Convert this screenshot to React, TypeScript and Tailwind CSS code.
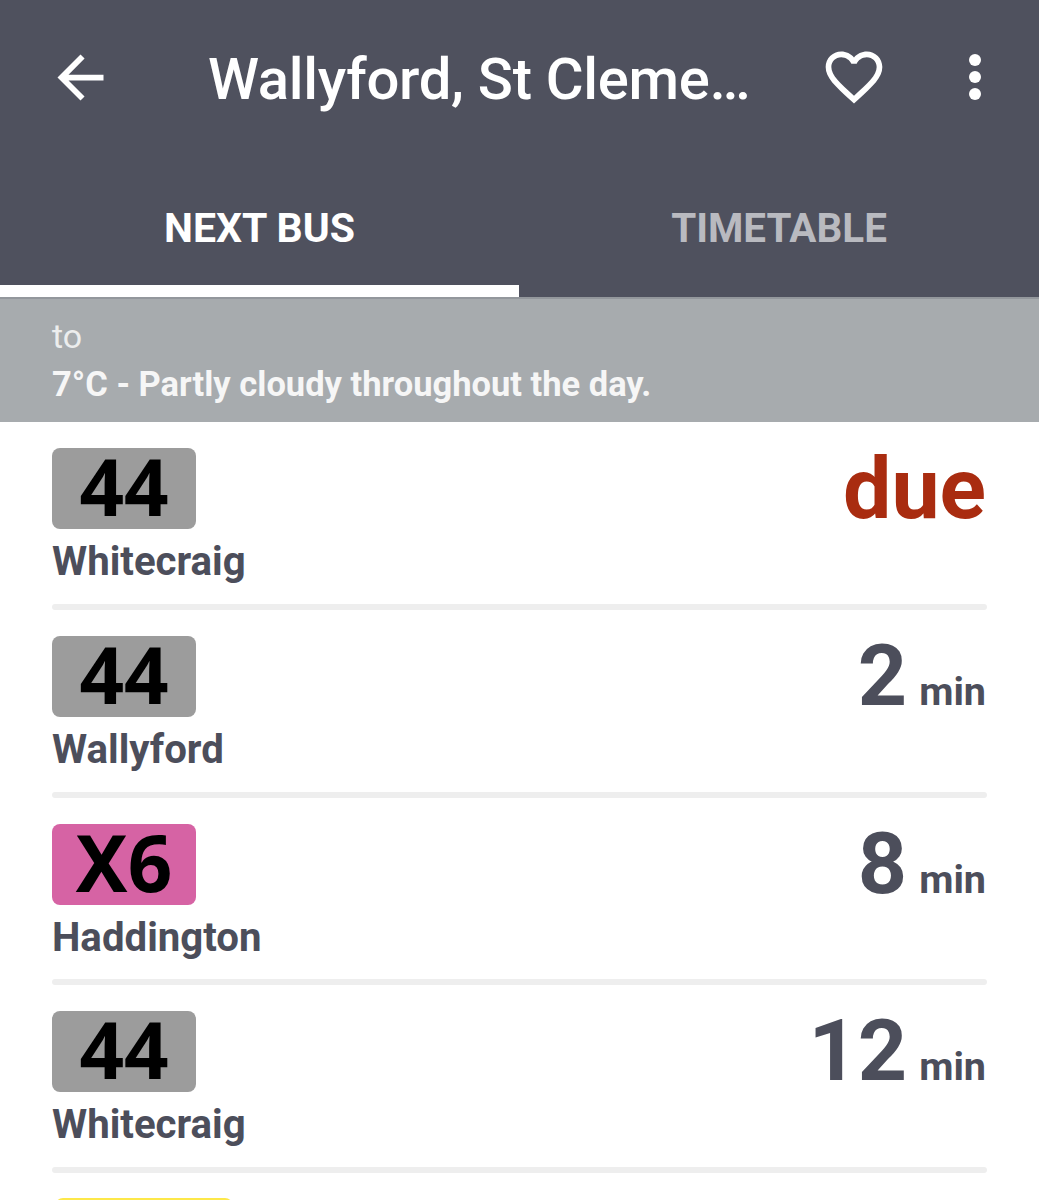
import { MdArrowBack, MdFavoriteBorder } from 'react-icons/md';

const rows = [
  { route: '44', dest: 'Whitecraig', time: 'due', badge: 'bg-[#9c9c9c]' },
  { route: '44', dest: 'Wallyford', time: '2', badge: 'bg-[#9c9c9c]' },
  { route: 'X6', dest: 'Haddington', time: '8', badge: 'bg-[#d663a4]' },
  { route: '44', dest: 'Whitecraig', time: '12', badge: 'bg-[#9c9c9c]' },
];

export default function App() {
  return (
    <div className="h-[1200px] w-[1039px] overflow-hidden bg-white font-['Roboto',sans-serif]">
      {/* App bar + tabs */}
      <div className="bg-[#4f515e]">
        <div className="flex h-[154px] items-center">
          <MdArrowBack className="ml-[46px] h-[69px] w-[69px] shrink-0 text-white" />
          <div className="ml-[93px] w-[612px] shrink-0 whitespace-nowrap pt-[3px] text-[58px] font-medium leading-none tracking-[-0.3px] text-white">
            Wallyford, St Cleme…
          </div>
          <MdFavoriteBorder className="h-[68px] w-[68px] shrink-0 text-white" />
          <div className="ml-[81px] flex shrink-0 flex-col gap-[5px]">
            <div className="h-[12px] w-[12px] rounded-full bg-white" />
            <div className="h-[12px] w-[12px] rounded-full bg-white" />
            <div className="h-[12px] w-[12px] rounded-full bg-white" />
          </div>
        </div>
        <div className="flex h-[143px]">
          <div className="flex w-[519px] flex-col border-b-[12px] border-white">
            <div className="flex flex-1 items-center justify-center pt-[18px] text-[41px] font-bold text-white">NEXT BUS</div>
          </div>
          <div className="flex flex-1 items-center justify-center pt-[8px] text-[40.4px] font-bold text-[#b9bac0]">TIMETABLE</div>
        </div>
      </div>

      {/* Notice band */}
      <div className="h-[125px] border-t-2 border-[#93979c] bg-[#a7abae] px-[52px] pt-[18px] text-white">
        <div className="text-[34px] leading-[38px] text-[#eceded]">to</div>
        <div className="mt-[9px] text-[34.5px] font-bold leading-[40px] text-[#f6f6f6]">7°C - Partly cloudy throughout the day.</div>
      </div>

      {/* Departures */}
      <div className="px-[52px] pt-[26.4px]">
        {rows.map((r, i) => (
          <div key={i} className="flex h-[187.6px] flex-col pb-[26px]">
            <div className="flex flex-1 justify-between">
              <div>
                <div className={`flex h-[81px] w-[144px] items-center justify-center rounded-[8px] pb-[5px] font-['Noto_Sans',sans-serif] text-[78px] font-bold leading-none text-black ${r.badge}`}>
                  {r.route}
                </div>
                <div className="mt-[11px] text-[40.2px] font-bold leading-[44px] text-[#4c4e5b]">{r.dest}</div>
              </div>
              {r.time === 'due' ? (
                <div className="mr-[1px] mt-[-4px] text-[86px] font-bold leading-[90px] text-[#a92c10]">due</div>
              ) : (
                <div className="mr-[1px] flex h-[84px] items-baseline gap-[12px] text-[#4c4e5b]">
                  <span className="text-[86px] font-bold leading-[80px]">{r.time}</span>
                  <span className="text-[39.5px] font-bold leading-none">min</span>
                </div>
              )}
            </div>
            <div className="h-[6px] rounded-full bg-[#eeeeee]" />
          </div>
        ))}
        <div className="-mt-[1px] h-[20px] w-[178px] translate-x-[3px] rounded-[8px] bg-[#fde84a]" />
      </div>
    </div>
  );
}
